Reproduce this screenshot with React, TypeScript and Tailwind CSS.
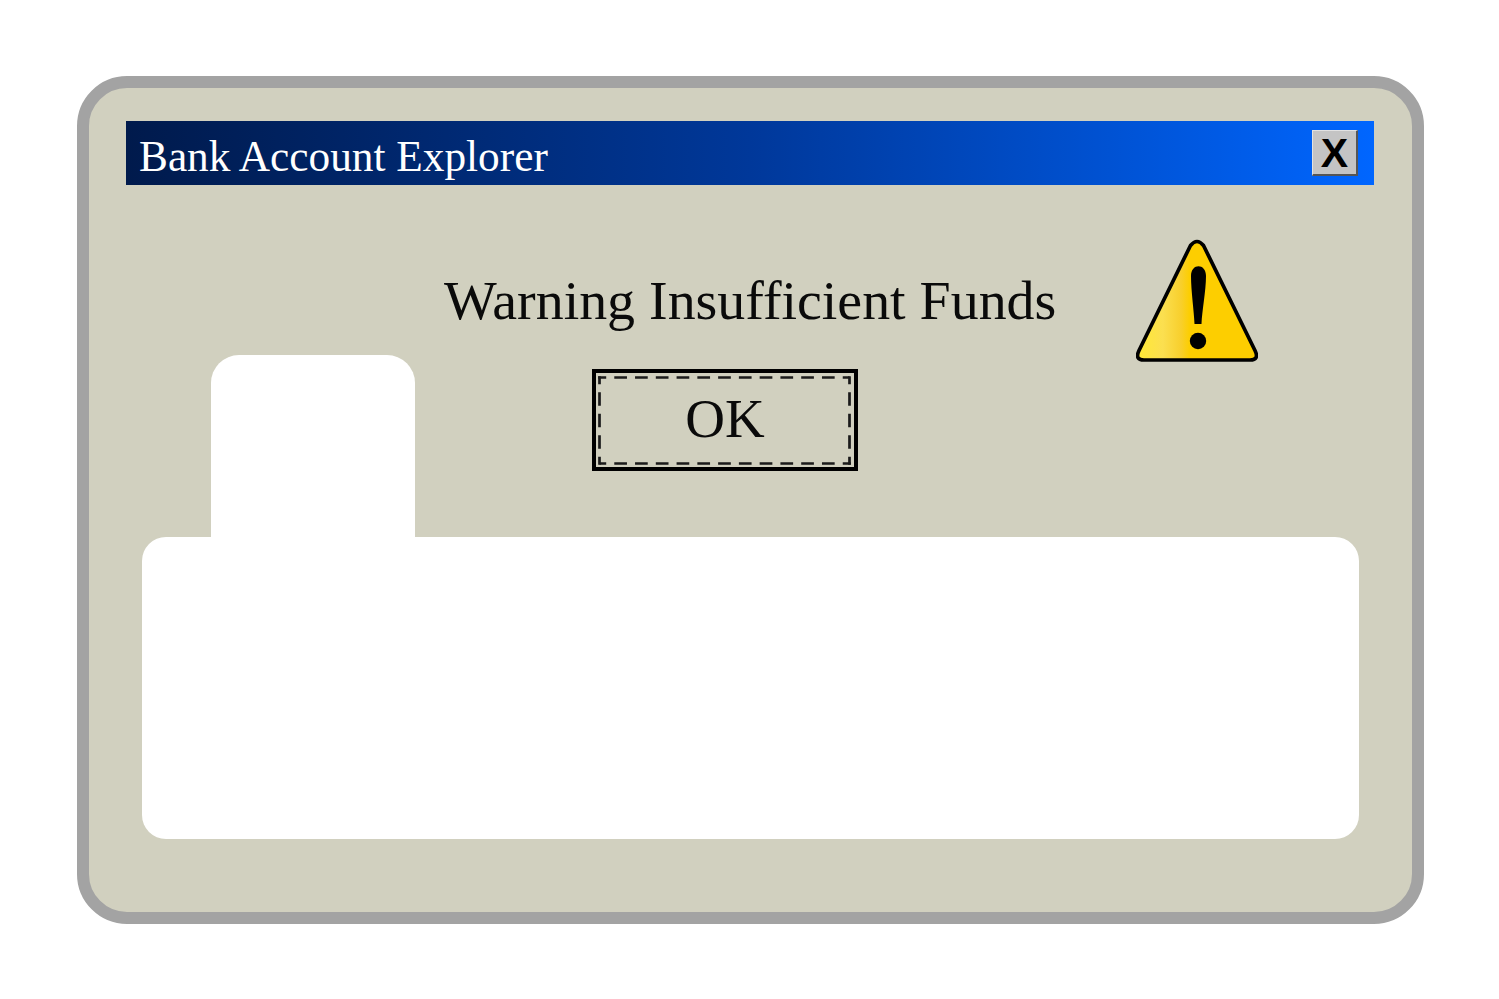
function WarningIcon() {
  return (
    <svg width="122" height="124" viewBox="0 0 122 124" className="block">
      <defs>
        <linearGradient id="warnFill" x1="0" y1="0" x2="122" y2="0" gradientUnits="userSpaceOnUse">
          <stop offset="0.02" stopColor="#ffe936" />
          <stop offset="0.22" stopColor="#fbdf50" />
          <stop offset="0.37" stopColor="#f8cf2c" />
          <stop offset="0.44" stopColor="#fdce00" />
          <stop offset="1" stopColor="#fdce00" />
        </linearGradient>
      </defs>
      <path
        d="M54.5 6.5 Q61 -1.5 67.5 6.5 L119 111.5 Q123.5 121 114 121 L8 121 Q-1.5 121 3 111.5 Z"
        fill="url(#warnFill)"
        stroke="#000"
        strokeWidth="3.7"
        strokeLinejoin="round"
      />
      <path d="M55 37 C55 24 70 24 70 37 C70 52 66 72 65.5 85 L58.5 85 C58 72 55 52 55 37 Z" fill="#000" />
      <circle cx="62" cy="102" r="8.2" fill="#000" />
    </svg>
  )
}

function OkButton() {
  return (
    <button className="relative mt-[39px] ml-[148px] flex h-[102px] w-[266px] items-center justify-center border-[4px] border-black font-['Liberation_Serif',serif] text-[55px] leading-none text-[#0a0a0a]">
      {/* focus ring: each side drawn alone so every corner gets the little L */}
      <svg width="258" height="94" className="absolute top-0 left-0" fill="none" stroke="#1a1a1a" strokeWidth="2.7">
        <path d="M2.15 4.5 H253.5" strokeDasharray="12.7 8.07" strokeDashoffset="4.65" />
        <path d="M3.5 90.5 H254.85" strokeDasharray="12.7 8.07" strokeDashoffset="6" />
        <path d="M3.5 3.15 V91.85" strokeDasharray="13.5 8" strokeDashoffset="5.5" />
        <path d="M253.5 3.15 V91.85" strokeDasharray="13.5 8" strokeDashoffset="5.5" />
      </svg>
      <span className="-mt-[4px]">OK</span>
    </button>
  )
}

export default function App() {
  return (
    <div className="h-[999px] w-[1499px] bg-white pt-[76px] pl-[77px]">
      <div className="h-[848px] w-[1347px] rounded-[50px] border-[12px] border-[#a3a3a3] bg-[#d1d0bf] pt-[33px]">
        <div className="ml-[37px] flex h-[64px] w-[1248px] items-center justify-between bg-linear-to-r from-[#001a4c] via-[#00389a] to-[#0066ff] pr-[16px] pl-[13px]">
          <span className="pt-[8px] font-['Liberation_Serif',serif] text-[43.3px] leading-none text-white">Bank Account Explorer</span>
          <div className="-mt-[1px] flex h-[46px] w-[46px] items-center justify-center border-t border-r-2 border-b-2 border-l border-t-[#e2e2e2] border-r-[#555555] border-b-[#555555] border-l-[#e2e2e2] bg-[#c4c4c4] pt-[2px] font-['Liberation_Sans',sans-serif] text-[41px] leading-none font-bold text-black">
            X
          </div>
        </div>

        <div className="flex h-[352px] pl-[122px]">
          <div className="h-[182px] w-[204px] self-end rounded-t-[28px] bg-white" />
          <div className="ml-[29px] w-[612px]">
            <h1 className="mt-[85px] font-['Liberation_Serif',serif] text-[55.9px] leading-[60px] font-normal whitespace-nowrap text-[#0a0a0a]">
              Warning Insufficient Funds
            </h1>
            <OkButton />
          </div>
          <div className="mt-[54px] ml-[80px]">
            <WarningIcon />
          </div>
        </div>

        <div className="ml-[53px] h-[302px] w-[1217px] rounded-[24px] bg-white" />
      </div>
    </div>
  )
}
